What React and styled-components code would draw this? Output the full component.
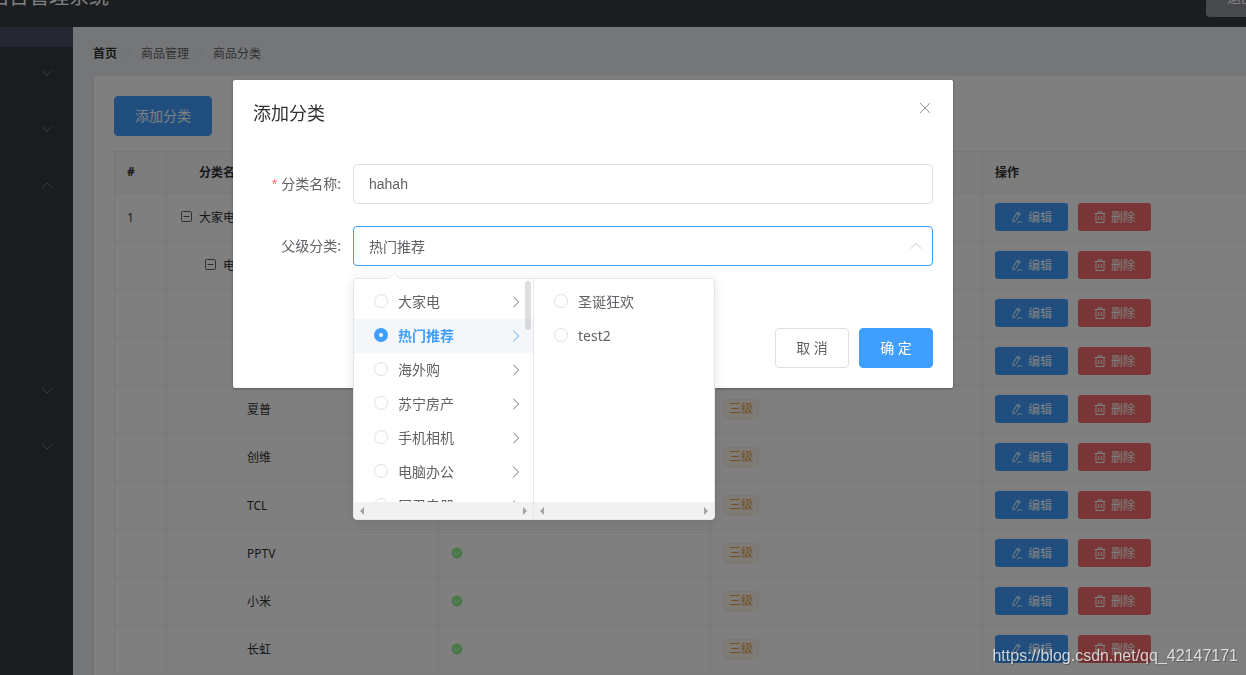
import { useState } from "react";
import styled, { createGlobalStyle, css } from "styled-components";

const rows = [
  { index: "1", name: "大家电", depth: 0, open: true, level: "一级" },
  { name: "电视", depth: 1, open: true, level: "二级" },
  { name: "曲面电视", depth: 2, level: "三级" },
  { name: "海信", depth: 2, level: "三级" },
  { name: "夏普", depth: 2, level: "三级" },
  { name: "创维", depth: 2, level: "三级" },
  { name: "TCL", depth: 2, level: "三级" },
  { name: "PPTV", depth: 2, level: "三级" },
  { name: "小米", depth: 2, level: "三级" },
  { name: "长虹", depth: 2, level: "三级" },
];

const parents = [
  "大家电",
  "热门推荐",
  "海外购",
  "苏宁房产",
  "手机相机",
  "电脑办公",
  "厨卫电器",
];

const children = ["圣诞狂欢", "test2"];

const ArrowIcon = ({ direction = "down", size = 12 }) => (
  <Arrow viewBox="0 0 12 12" width={size} height={size} $direction={direction}>
    <path d="M1.5 3.7 6 8.3l4.5-4.6" />
  </Arrow>
);

const EditIcon = () => (
  <Icon viewBox="0 0 12 12" width="12" height="12">
    <path d="M6.6.9 9.2 2.3 4.7 9.6 2 11.1 2.1 8.2zM5.6 2.5l2.6 1.5M6 11.1h5.2" />
  </Icon>
);

const DeleteIcon = () => (
  <Icon viewBox="0 0 12 12" width="12" height="12">
    <path d="M.7 2.5h10.6M4 2.4V.9h4v1.5M2 2.8v8.7h8V2.8M4.7 5v4M7.3 5v4" />
  </Icon>
);

const MinusIcon = () => (
  <Icon viewBox="0 0 12 12" width="12" height="12">
    <rect x=".5" y=".5" width="10" height="10" rx="1" />
    <path d="M2.5 5.5h6" />
  </Icon>
);

const SuccessIcon = () => (
  <svg viewBox="0 0 12 12" width="12" height="12">
    <circle cx="6" cy="6" r="5.4" fill="#90ee90" />
    <path d="m3.4 6.1 1.9 1.8 3.3-3.5" fill="none" stroke="#fff" />
  </svg>
);

const CloseIcon = () => (
  <Icon viewBox="0 0 12 12" width="12" height="12">
    <path d="m1 1 10 10M11 1 1 11" />
  </Icon>
);

const MenuScrollbar = () => (
  <HorizontalBar>
    <svg viewBox="0 0 6 8" width="6" height="8">
      <path d="M5 0v8L1 4z" />
    </svg>
    <svg viewBox="0 0 6 8" width="6" height="8">
      <path d="M1 0v8l4-4z" />
    </svg>
  </HorizontalBar>
);

const App = () => {
  const [name, setName] = useState("hahah");
  const [parent, setParent] = useState("热门推荐");
  const [child, setChild] = useState("");

  return (
    <Page>
      <GlobalStyle />
      <Header>
        <Title>后台管理系统</Title>
        <LogoutButton>退出</LogoutButton>
      </Header>
      <Body>
        <Aside>
          <Toggle />
          <MenuItem>
            <ArrowIcon />
          </MenuItem>
          <MenuItem>
            <ArrowIcon />
          </MenuItem>
          <MenuItem>
            <ArrowIcon direction="up" />
          </MenuItem>
          <SubMenu />
          <MenuItem>
            <ArrowIcon />
          </MenuItem>
          <MenuItem>
            <ArrowIcon />
          </MenuItem>
        </Aside>
        <Main>
          <Breadcrumb>
            <HomeLink href="#">首页</HomeLink>
            <ArrowIcon direction="right" />
            <span>商品管理</span>
            <ArrowIcon direction="right" />
            <span>商品分类</span>
          </Breadcrumb>
          <Card>
            <Button $primary $wide>
              添加分类
            </Button>
            <Table>
              <colgroup>
                <IndexCol />
                <col />
                <col />
                <col />
                <col />
              </colgroup>
              <thead>
                <tr>
                  <Th>#</Th>
                  <Th $indent>分类名称</Th>
                  <Th>是否有效</Th>
                  <Th>排序</Th>
                  <Th>操作</Th>
                </tr>
              </thead>
              <tbody>
                {rows.map((row) => (
                  <tr key={row.name}>
                    <Td>{row.index}</Td>
                    <Td>
                      <TreeCell $depth={row.depth}>
                        <TreeIcon>{row.open && <MinusIcon />}</TreeIcon>
                        {row.name}
                      </TreeCell>
                    </Td>
                    <Td>
                      <Cell>
                        <SuccessIcon />
                      </Cell>
                    </Td>
                    <Td>
                      <Cell>
                        <Tag>{row.level}</Tag>
                      </Cell>
                    </Td>
                    <Td>
                      <Cell>
                        <MiniButton $color="#409eff">
                          <EditIcon />
                          编辑
                        </MiniButton>
                        <MiniButton $color="#f56c6c">
                          <DeleteIcon />
                          删除
                        </MiniButton>
                      </Cell>
                    </Td>
                  </tr>
                ))}
              </tbody>
            </Table>
          </Card>
        </Main>
      </Body>

      <Mask>
        <Dialog role="dialog" aria-labelledby="dialog-title">
          <DialogHeader>
            <DialogTitle id="dialog-title">添加分类</DialogTitle>
            <CloseButton aria-label="Close">
              <CloseIcon />
            </CloseButton>
          </DialogHeader>
          <Form>
            <FormItem>
              <Label htmlFor="cat-name">
                <Required>*</Required>分类名称:
              </Label>
              <Field>
                <Input
                  id="cat-name"
                  value={name}
                  onChange={(e) => setName(e.target.value)}
                />
              </Field>
            </FormItem>
            <FormItem>
              <Label htmlFor="cat-parent">父级分类:</Label>
              <Field>
                <Input id="cat-parent" value={parent} readOnly $active />
                <Suffix>
                  <ArrowIcon direction="up" size={14} />
                </Suffix>
                <Popper>
                  <PopperArrow />
                  <Menu>
                    <MenuList>
                      {parents.map((item) => (
                        <Option key={item} $active={item === parent}>
                          <Radio
                            type="radio"
                            name="parent"
                            checked={item === parent}
                            onChange={() => setParent(item)}
                          />
                          <OptionText>{item}</OptionText>
                          <ArrowIcon direction="right" size={14} />
                        </Option>
                      ))}
                    </MenuList>
                    <Thumb />
                    <MenuScrollbar />
                  </Menu>
                  <Menu>
                    <MenuList>
                      {children.map((item) => (
                        <Option key={item}>
                          <Radio
                            type="radio"
                            name="child"
                            checked={item === child}
                            onChange={() => setChild(item)}
                          />
                          <OptionText>{item}</OptionText>
                        </Option>
                      ))}
                    </MenuList>
                    <MenuScrollbar />
                  </Menu>
                </Popper>
              </Field>
            </FormItem>
          </Form>
          <DialogFooter>
            <Button>取 消</Button>
            <Button $primary>确 定</Button>
          </DialogFooter>
        </Dialog>
      </Mask>
      <Watermark>https://blog.csdn.net/qq_42147171</Watermark>
    </Page>
  );
};

export default App;

const GlobalStyle = createGlobalStyle`
  * {
    box-sizing: border-box;
  }

  body {
    margin: 0;
    overflow: hidden;
    font-family: "Noto Sans", "Noto Sans CJK SC", sans-serif;
    font-size: 14px;
    color: #606266;
  }

  button,
  input {
    font-family: inherit;
  }
`;

const Page = styled.div`
  display: flex;
  flex-direction: column;
  height: 100vh;
  overflow: hidden;
`;

const Header = styled.header`
  display: flex;
  flex-shrink: 0;
  align-items: flex-end;
  justify-content: space-between;
  height: 27px;
  overflow: hidden;
  background-color: #373d41;
`;

const Title = styled.span`
  margin-left: -11px;
  font-size: 20px;
  line-height: 60px;
  color: #fff;
`;

const LogoutButton = styled.button`
  width: 70px;
  height: 40px;
  margin: 0 -30px 10px 0;
  padding: 0;
  border: none;
  border-radius: 4px;
  font-size: 14px;
  color: #fff;
  background-color: #909399;
`;

const Body = styled.div`
  display: flex;
  flex: 1;
  min-height: 0;
`;

const Aside = styled.aside`
  flex: 0 0 73px;
  background-color: #363841;
`;

const Toggle = styled.div`
  height: 20px;
  background-color: #4a5064;
`;

const MenuItem = styled.div`
  display: flex;
  align-items: center;
  justify-content: flex-end;
  height: 56px;
  padding: 0 20px 4px 0;
  color: #909399;
`;

const SubMenu = styled.div`
  height: 150px;
`;

const Main = styled.main`
  flex: 1;
  min-width: 0;
  padding: 19px 0 0 20px;
  overflow: hidden;
  background-color: #eaedf1;
`;

const Breadcrumb = styled.nav`
  display: flex;
  align-items: center;
  gap: 6px;
  height: 13px;
  margin-bottom: 16px;
  font-size: 12px;

  svg {
    color: #c0c4cc;
  }
`;

const HomeLink = styled.a`
  font-weight: 700;
  color: #303133;
  text-decoration: none;
`;

/* the card runs past the right edge of the window */
const Card = styled.section`
  margin-right: -30px;
  padding: 20px;
  border: 1px solid #ebeef5;
  border-radius: 4px;
  background-color: #fff;
  box-shadow: 0 1px 2px rgba(0, 0, 0, 0.15);
`;

const Button = styled.button`
  width: ${(props) => (props.$wide ? "98px" : "74px")};
  height: 40px;
  padding: 0 0 2px;
  border: 1px solid ${(props) => (props.$primary ? "#409eff" : "#dcdfe6")};
  border-radius: 4px;
  font-size: 14px;
  color: ${(props) => (props.$primary ? "#fff" : "#606266")};
  background-color: ${(props) => (props.$primary ? "#409eff" : "#fff")};
`;

const Table = styled.table`
  width: 100%;
  margin-top: 15px;
  border-top: 1px solid #ebeef5;
  border-left: 1px solid #ebeef5;
  border-spacing: 0;
  table-layout: fixed;
  font-size: 12px;
  color: #303133;
`;

const IndexCol = styled.col`
  width: 52px;
`;

const cell = css`
  padding: 0 12px 1px;
  border-right: 1px solid #ebeef5;
  border-bottom: 1px solid #ebeef5;
  text-align: left;
`;

const Th = styled.th`
  ${cell}
  height: 42px;
  padding-bottom: 2px;
  padding-left: ${(props) => (props.$indent ? "32px" : "12px")};
  background-color: #fafafa;
`;

const Td = styled.td`
  ${cell}
  height: 48px;
`;

const Cell = styled.div`
  display: flex;
  align-items: center;
  gap: 10px;
`;

const TreeCell = styled.div`
  display: flex;
  align-items: center;
  padding-left: ${(props) => props.$depth * 24}px;
`;

const TreeIcon = styled.span`
  display: flex;
  width: 20px;
  padding-left: 2px;
  color: #606266;
`;

const Tag = styled.span`
  height: 20px;
  padding: 0 5px;
  border: 1px solid #faecd8;
  border-radius: 4px;
  line-height: 18px;
  color: #e6a23c;
  background-color: #fdf6ec;
`;

const MiniButton = styled.button`
  display: flex;
  align-items: center;
  justify-content: center;
  gap: 5px;
  width: 73px;
  height: 28px;
  padding: 0 0 1px;
  border: none;
  border-radius: 3px;
  font-size: 12px;
  color: #fff;
  background-color: ${(props) => props.$color};
`;

const Icon = styled.svg`
  flex-shrink: 0;
  fill: none;
  stroke: currentColor;
  stroke-width: 1;
`;

const turns = { down: 0, up: 180, right: -90 };

const Arrow = styled(Icon)`
  stroke-width: 0.8;
  transform: rotate(${(props) => turns[props.$direction]}deg);
`;

const Mask = styled.div`
  position: fixed;
  inset: 0;
  display: flex;
  align-items: flex-start;
  justify-content: center;
  padding: 80px 60px 0 0;
  background-color: rgba(0, 0, 0, 0.5);
`;

const Dialog = styled.div`
  width: 720px;
  border-radius: 2px;
  background-color: #fff;
  box-shadow: 0 1px 3px rgba(0, 0, 0, 0.3);
`;

const DialogHeader = styled.div`
  display: flex;
  justify-content: space-between;
  padding: 20px 20px 8px;
`;

const DialogTitle = styled.h2`
  margin: 0;
  font-size: 18px;
  font-weight: 400;
  line-height: 26px;
  color: #303133;
`;

const CloseButton = styled.button`
  display: flex;
  height: 16px;
  padding: 2px;
  border: none;
  color: #909399;
  background: none;
`;

const Form = styled.form`
  display: flex;
  flex-direction: column;
  gap: 22px;
  padding: 30px 20px 52px;
`;

const FormItem = styled.div`
  display: flex;
`;

const Label = styled.label`
  flex: 0 0 100px;
  padding-right: 12px;
  line-height: 40px;
  text-align: right;
`;

const Required = styled.span`
  margin-right: 4px;
  font-family: "Liberation Sans", sans-serif;
  color: #f56c6c;
`;

const Field = styled.div`
  position: relative;
  flex: 1;
`;

const Input = styled.input`
  display: block;
  width: 100%;
  height: 40px;
  padding: 0 15px;
  border: 1px solid ${(props) => (props.$active ? "#409eff" : "#dcdfe6")};
  border-radius: 4px;
  outline: none;
  font-family: "Liberation Sans", "Noto Sans CJK SC", sans-serif;
  font-size: 14px;
  color: #606266;
`;

const Suffix = styled.span`
  position: absolute;
  top: 0;
  right: 10px;
  display: flex;
  align-items: center;
  height: 40px;
  color: #c0c4cc;
`;

const Popper = styled.div`
  position: absolute;
  top: 52px;
  left: 0;
  display: flex;
  border: 1px solid #e4e7ed;
  border-radius: 4px;
  background-color: #fff;
  box-shadow: 0 2px 12px rgba(0, 0, 0, 0.1);
`;

const PopperArrow = styled.span`
  position: absolute;
  top: -5px;
  left: 36px;
  width: 9px;
  height: 9px;
  border: 1px solid #ebeef5;
  border-right: none;
  border-bottom: none;
  background-color: #fff;
  transform: rotate(45deg);
`;

const Menu = styled.div`
  position: relative;
  display: flex;
  flex-direction: column;
  width: 180px;
  height: 240px;
  overflow: hidden;
  border-right: 1px solid #e4e7ed;
  border-radius: 0 0 0 3px;

  & + & {
    border-right: none;
    border-radius: 0 0 3px 0;
  }
`;

const MenuList = styled.div`
  flex: 1;
  min-height: 0;
  padding-top: 6px;
  overflow: hidden;
`;

const Option = styled.label`
  display: flex;
  align-items: center;
  height: 34px;
  padding: 0 10px 0 20px;
  font-weight: ${(props) => (props.$active ? 700 : 400)};
  color: ${(props) => (props.$active ? "#409eff" : "#606266")};
  background-color: ${(props) => (props.$active ? "#f5f7fa" : "transparent")};
`;

const OptionText = styled.span`
  flex: 1;
  padding-bottom: 2px;
`;

const Radio = styled.input`
  width: 14px;
  height: 14px;
  margin: 0 10px 2px 0;
  border: 1px solid #dcdfe6;
  border-radius: 50%;
  appearance: none;
  background-color: #fff;

  &:checked {
    border: 5px solid #409eff;
  }
`;

const Thumb = styled.div`
  position: absolute;
  top: 2px;
  right: 2px;
  width: 6px;
  height: 49px;
  border-radius: 3px;
  background-color: rgba(144, 147, 153, 0.3);
`;

const HorizontalBar = styled.div`
  display: flex;
  align-items: center;
  justify-content: space-between;
  height: 17px;
  padding: 0 5px;
  background-color: #f1f1f1;
  fill: #a3a3a3;
`;

const DialogFooter = styled.div`
  display: flex;
  justify-content: flex-end;
  gap: 10px;
  padding: 10px 20px 20px;
`;

const Watermark = styled.span`
  position: fixed;
  right: 8px;
  bottom: 8px;
  font-family: "Liberation Sans", sans-serif;
  font-size: 16px;
  line-height: 22px;
  color: rgba(255, 255, 255, 0.75);
  text-shadow: 1px 1px 1px rgba(0, 0, 0, 0.3);
`;
